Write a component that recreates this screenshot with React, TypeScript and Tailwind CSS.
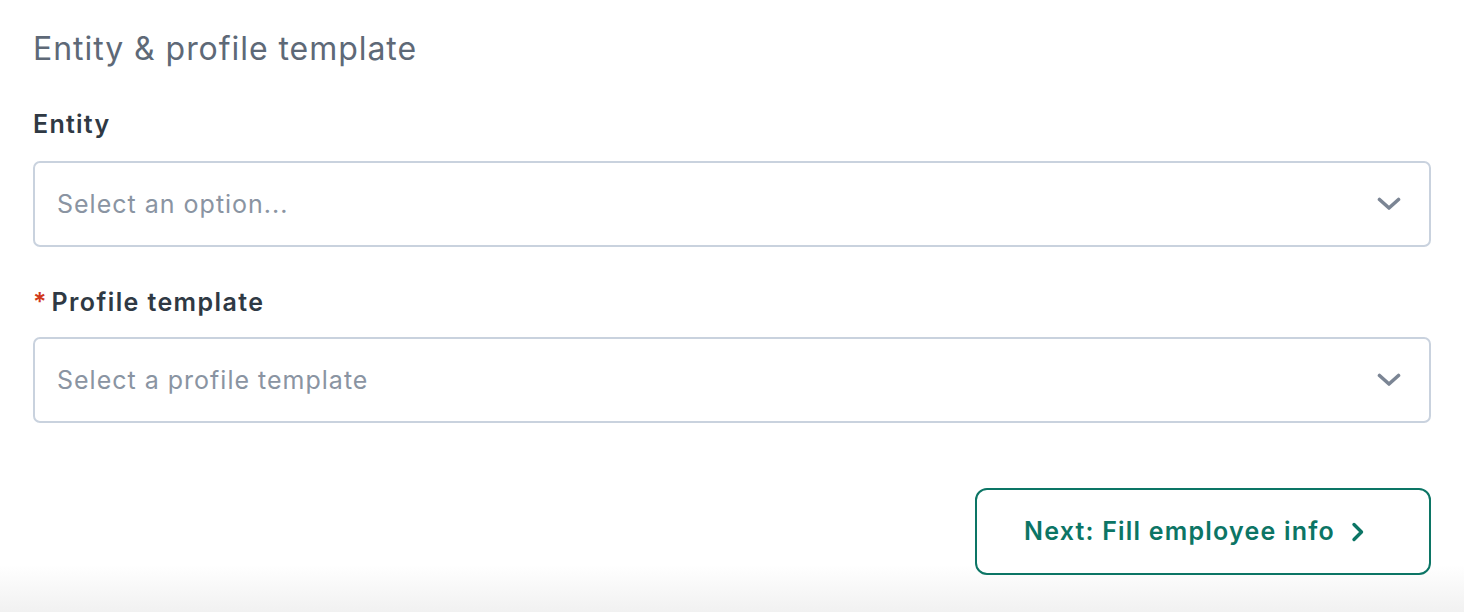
import React from "react";

function Chevron() {
  return (
    <svg width="24" height="14" viewBox="0 0 24 14" fill="none" className="shrink-0">
      <path d="M2.5 2.5 L12 11 L21.5 2.5" stroke="#7b8594" strokeWidth="3.6" strokeLinecap="round" strokeLinejoin="round" />
    </svg>
  );
}

function Select({ placeholder }: { placeholder: string }) {
  return (
    <div className="flex h-[86px] w-full items-center justify-between rounded-[7px] border-2 border-[#c9d2de] bg-white pl-[22px] pr-[28px]">
      <span className="text-[25px] leading-[32px] tracking-[1px] text-[#8a94a2]">{placeholder}</span>
      <Chevron />
    </div>
  );
}

export default function App() {
  return (
    <div
      className="h-[612px] w-full bg-[linear-gradient(to_bottom,#ffffff_565px,#f1f1f1_612px)] px-[33px] pt-[29px]"
      style={{ fontFamily: "Inter, 'Noto Sans', sans-serif" }}
    >
      <h1 className="text-[32px] font-normal leading-[40px] tracking-[0.95px] text-[#5e6977]">Entity &amp; profile template</h1>

      <div className="mt-[39px] text-[25px] font-semibold leading-[32px] tracking-[1.25px] text-[#2f3944]">Entity</div>
      <div className="mt-[21px]">
        <Select placeholder="Select an option..." />
      </div>

      <div className="mt-[39px] flex items-baseline text-[25px] font-semibold leading-[32px] text-[#2f3944]">
        <span className="mr-[5px] text-[#d0391b]">*</span>
        <span className="tracking-[1.4px]">Profile template</span>
      </div>
      <div className="mt-[19px]">
        <Select placeholder="Select a profile template" />
      </div>

      <div className="mt-[65px] flex justify-end">
        <button className="flex h-[87px] w-[456px] items-center justify-start gap-[16px] rounded-[12px] border-2 border-[#0c7565] bg-white pl-[47px] text-[25px] font-semibold tracking-[1.2px] text-[#0c7565]">
          <span>Next: Fill employee info</span>
          <svg width="14" height="20" viewBox="0 0 14 20" fill="none">
            <path d="M3 2.5 L10.5 10 L3 17.5" stroke="#0c7565" strokeWidth="3.4" strokeLinecap="round" strokeLinejoin="round" />
          </svg>
        </button>
      </div>
    </div>
  );
}
